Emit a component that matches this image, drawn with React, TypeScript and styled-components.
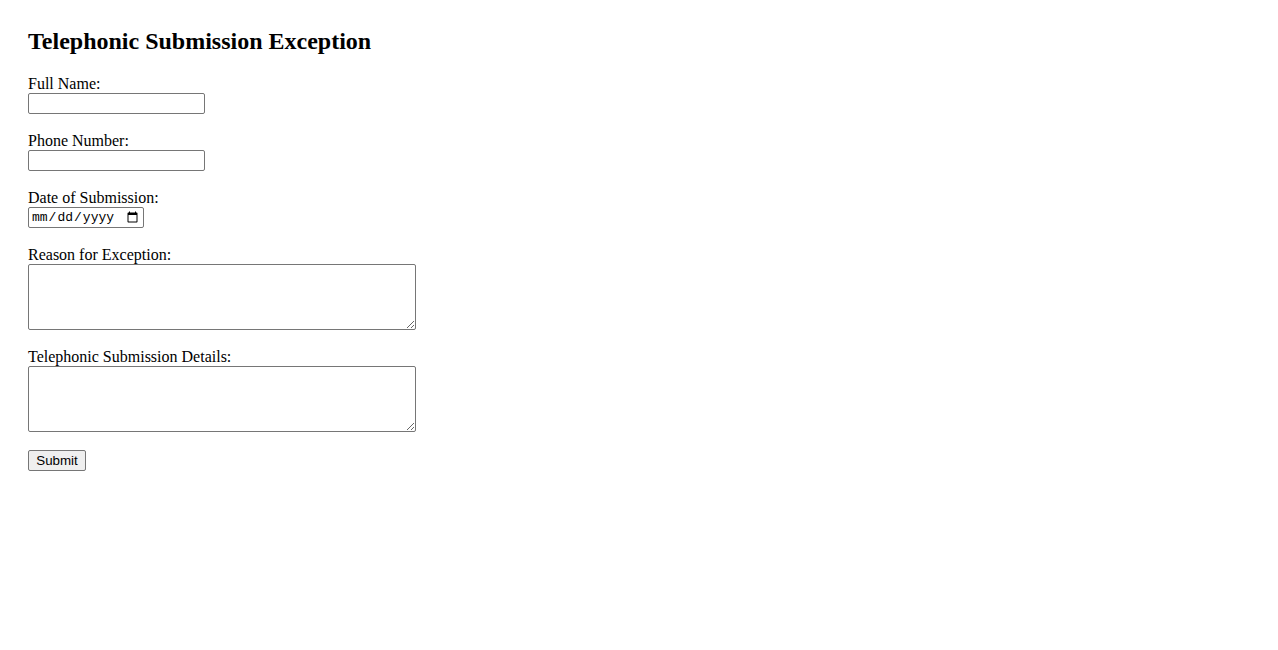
import React from 'react';
import styled, { createGlobalStyle } from 'styled-components';

const GlobalStyle = createGlobalStyle`
  body {
    margin: 0;
    background: #fff;
    font-family: "Liberation Serif", "Times New Roman", serif;
    font-size: 16px;
    color: #000;
  }
`;

const Page = styled.div`
  padding: 28px;
`;

const Title = styled.h2`
  margin: 0 0 20px;
  font-size: 24px;
  font-weight: bold;
  line-height: 27px;
`;

const Form = styled.form`
  display: flex;
  flex-direction: column;
  align-items: flex-start;
`;

const Field = styled.div`
  display: flex;
  flex-direction: column;
  align-items: flex-start;
  margin-bottom: 18px;
`;

const Label = styled.label`
  display: block;
  line-height: 18px;
`;

const fieldBorder = `
  box-sizing: border-box;
  border: 1px solid #767676;
  border-radius: 2px;
  background: #fff;
  margin: 0;
`;

const TextInput = styled.input<{ $width: number }>`
  ${fieldBorder}
  width: ${p => p.$width}px;
  height: 21px;
  padding: 1px 2px;
  font-family: "Liberation Mono", monospace;
  font-size: 13px;
`;

const TextArea = styled.textarea`
  ${fieldBorder}
  width: 388px;
  height: 66px;
  padding: 2px;
  font-family: "Liberation Mono", monospace;
  font-size: 13px;
  resize: both;
`;

const SubmitButton = styled.button`
  box-sizing: border-box;
  width: 58px;
  height: 21px;
  padding: 1px 6px;
  border: 1px solid #767676;
  border-radius: 2px;
  background: #efefef;
  font-family: "Liberation Sans", Arial, sans-serif;
  font-size: 13.33px;
  color: #000;
`;

export default function App() {
  return (
    <Page>
      <GlobalStyle />
      <Title>Telephonic Submission Exception</Title>
      <Form onSubmit={e => e.preventDefault()}>
        <Field>
          <Label htmlFor="name">Full Name:</Label>
          <TextInput id="name" type="text" $width={177} />
        </Field>
        <Field>
          <Label htmlFor="phone">Phone Number:</Label>
          <TextInput id="phone" type="tel" $width={177} />
        </Field>
        <Field>
          <Label htmlFor="date">Date of Submission:</Label>
          <TextInput id="date" type="date" $width={116} />
        </Field>
        <Field>
          <Label htmlFor="reason">Reason for Exception:</Label>
          <TextArea id="reason" />
        </Field>
        <Field>
          <Label htmlFor="details">Telephonic Submission Details:</Label>
          <TextArea id="details" />
        </Field>
        <SubmitButton type="submit">Submit</SubmitButton>
      </Form>
    </Page>
  );
}
